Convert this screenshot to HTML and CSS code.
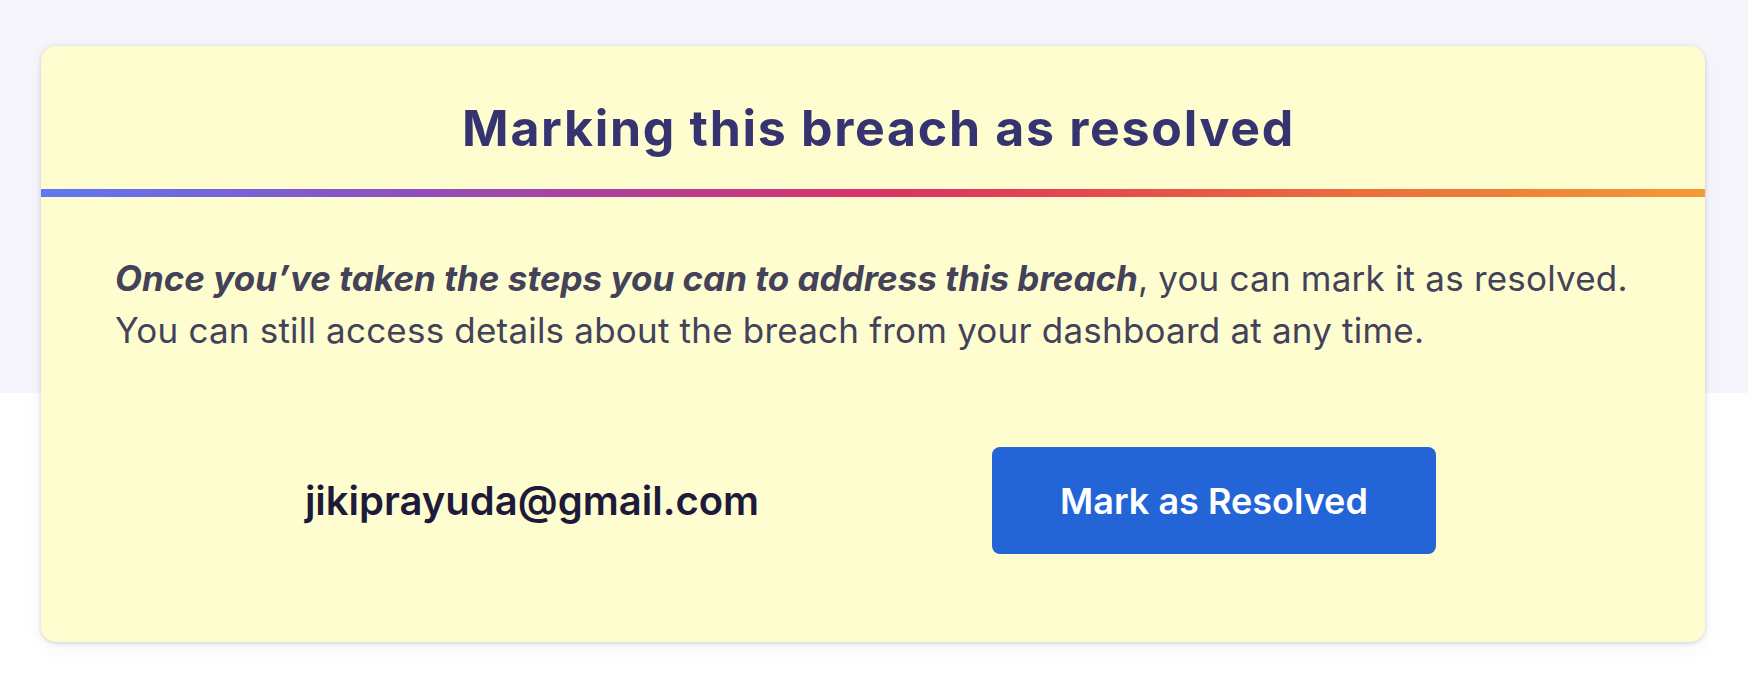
FILE: index.html
```html
<!DOCTYPE html>
<html lang="en">
<head>
<meta charset="utf-8">
<title>Marking this breach as resolved</title>
<link rel="stylesheet" href="styles.css">
</head>
<body>
<main class="page">
  <section class="card">
    <header class="card-header">
      <h1 class="card-title">Marking this breach as resolved</h1>
    </header>
    <div class="gradient-bar"></div>
    <div class="card-body">
      <p class="card-text"><strong class="emph">Once you’ve taken the steps you can to address this breach</strong>, you can mark it as resolved.<br>You can still access details about the breach from your dashboard at any time.</p>
      <div class="resolve-row">
        <div class="resolve-cell">
          <span class="email">jikiprayuda@gmail.com</span>
        </div>
        <div class="resolve-cell">
          <button class="resolve-btn" type="button">Mark as Resolved</button>
        </div>
      </div>
    </div>
  </section>
</main>
</body>
</html>
```
FILE: styles.css
```css
html, body {
  margin: 0;
  padding: 0;
}

body {
  width: 1748px;
  height: 696px;
  overflow: hidden;
  background: linear-gradient(#f7f5fc 0, #f7f5fc 393px, #ffffff 393px, #ffffff 100%);
  font-family: Inter, "Noto Sans", sans-serif;
}

.page {
  padding: 46px 43px 0 41px;
}

.card {
  background: #fefdd0;
  border-radius: 15px;
  overflow: hidden;
  box-shadow: 0 1px 4px rgba(60, 58, 90, 0.22), 0 6px 20px rgba(60, 58, 90, 0.05);
}

.card-header {
  padding: 52px 0 31px 11px;
  text-align: center;
}

.card-title {
  margin: 0;
  font-size: 50px;
  line-height: 60px;
  font-weight: 700;
  color: #363470;
  letter-spacing: 1.7px;
}

.gradient-bar {
  height: 8px;
  background: linear-gradient(90deg, #5e78f4 0%, #8b52c4 20%, #b23e98 35%, #da3168 50%, #e64650 62%, #ea6440 75%, #ef8038 88%, #f39a38 100%);
}

.card-body {
  padding: 55px 74px 88px;
}

.card-text {
  margin: 0;
  font-size: 35px;
  line-height: 52px;
  letter-spacing: 0.2px;
  color: #43425a;
  font-weight: 400;
  white-space: nowrap;
}

.emph {
  font-style: italic;
  font-weight: 700;
  letter-spacing: 0;
}

.resolve-row {
  display: grid;
  grid-template-columns: 1fr 1fr;
  align-items: center;
  justify-items: center;
  max-width: 1364px;
  margin: 91px auto 0;
}

.resolve-cell {
  display: flex;
  justify-content: center;
}

.email {
  font-size: 40px;
  font-weight: 600;
  color: #1d1a3a;
}

.resolve-btn {
  width: 444px;
  height: 107px;
  border: 0;
  border-radius: 8px;
  background: #2364d7;
  color: #ffffff;
  font-family: Inter, "Noto Sans", sans-serif;
  font-size: 36px;
  font-weight: 600;
  cursor: pointer;
}
```
